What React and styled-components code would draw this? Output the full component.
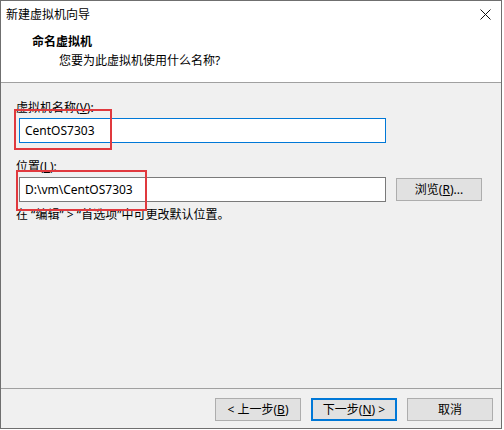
import React from 'react';
import styled, { createGlobalStyle } from 'styled-components';

const GlobalStyle = createGlobalStyle`
  html, body {
    margin: 0;
    padding: 0;
    background: #ffffff;
  }
  body {
    font-family: "Noto Sans", "Noto Sans CJK SC", sans-serif;
    font-size: 12px;
    color: #000;
  }
`;

const fields = [
  { label: '虚拟机名称', key: 'V', value: 'CentOS7303', focused: true },
  { label: '位置', key: 'L', value: 'D:\\vm\\CentOS7303', browse: true },
];

// 빨간 표시 박스 (스크린샷 위의 주석)
const marks = [
  { left: 13, top: 108, width: 98, height: 41 },
  { left: 15, top: 169, width: 131, height: 41 },
];

const CloseIcon = () => (
  <svg width="11" height="11" viewBox="0 0 11 11">
    <path d="M0.5 0.5 L10.5 10.5 M10.5 0.5 L0.5 10.5" stroke="#111" strokeWidth="1" fill="none" />
  </svg>
);

const Key = ({ children }) => <u>{children}</u>;

const App = () => {
  return (
    <>
      <GlobalStyle />
      <Window>
        <TitleBar>
          <span>新建虚拟机向导</span>
          <CloseIcon />
        </TitleBar>
        <Header>
          <HeaderTitle>命名虚拟机</HeaderTitle>
          <HeaderSub>您要为此虚拟机使用什么名称?</HeaderSub>
        </Header>
        <Body>
          {fields.map((f, i) => (
            <Field key={f.key} $first={i === 0}>
              <Label>
                {f.label}(<Key>{f.key}</Key>):
              </Label>
              <FieldRow>
                <TextBox $focused={f.focused}>{f.value}</TextBox>
                {f.browse && (
                  <Button>
                    浏览(<Key>R</Key>)...
                  </Button>
                )}
              </FieldRow>
            </Field>
          ))}
          <Hint>在 “编辑” &gt; “首选项”中可更改默认位置。</Hint>
        </Body>
        <Footer>
          <Button>
            &lt; 上一步(<Key>B</Key>)
          </Button>
          <Button $primary>
            下一步(<Key>N</Key>) &gt;
          </Button>
          <Button>取消</Button>
        </Footer>
        {marks.map((m, i) => (
          <Mark key={i} style={{ left: m.left, top: m.top, width: m.width, height: m.height }} />
        ))}
      </Window>
    </>
  );
};

const Window = styled.div`
  position: relative;
  box-sizing: border-box;
  width: 502px;
  height: 429px;
  border: 1px solid #6f6f6f;
  background: #f0f0f0;
  display: flex;
  flex-direction: column;
`;

const TitleBar = styled.div`
  height: 27px;
  background: #ffffff;
  display: flex;
  align-items: center;
  justify-content: space-between;
  padding: 0 10px 0 5px;
  line-height: 16px;
`;

const Header = styled.div`
  background: #ffffff;
  border-bottom: 1px solid #a0a0a0;
  padding: 6px 0 13px 31px;
  display: flex;
  flex-direction: column;
  gap: 3px;
  line-height: 16px;
`;

const HeaderTitle = styled.div`
  font-weight: bold;
`;

const HeaderSub = styled.div`
  padding-left: 27px;
`;

const Body = styled.div`
  flex: 1;
  padding: 17px 0 0 15px;
  display: flex;
  flex-direction: column;
`;

const Field = styled.div`
  display: flex;
  flex-direction: column;
  gap: 2px;
  margin-top: ${(p) => (p.$first ? '0' : '16px')};
`;

const Label = styled.div`
  line-height: 16px;
`;

const FieldRow = styled.div`
  display: flex;
  align-items: center;
  gap: 10px;
  padding-left: 3px;
`;

const TextBox = styled.div`
  box-sizing: border-box;
  width: 367px;
  height: 25px;
  background: #ffffff;
  border: 1px solid ${(p) => (p.$focused ? '#0078d7' : '#7a7a7a')};
  padding-left: 5px;
  display: flex;
  align-items: center;
  line-height: 16px;
`;

const Hint = styled.div`
  margin-top: 5px;
  line-height: 16px;
`;

const Footer = styled.div`
  height: 40px;
  box-sizing: border-box;
  border-top: 1px solid #a0a0a0;
  display: flex;
  justify-content: flex-end;
  align-items: flex-start;
  gap: 10px;
  padding: 9px 8px 0 0;
`;

const Button = styled.div`
  box-sizing: border-box;
  width: 86px;
  height: 23px;
  background: #e1e1e1;
  border: ${(p) => (p.$primary ? '2px solid #0078d7' : '1px solid #adadad')};
  display: flex;
  align-items: center;
  justify-content: center;
  line-height: 16px;
`;

const Mark = styled.div`
  position: absolute;
  box-sizing: border-box;
  border: 2px solid #e0393e;
  pointer-events: none;
`;

export default App;
